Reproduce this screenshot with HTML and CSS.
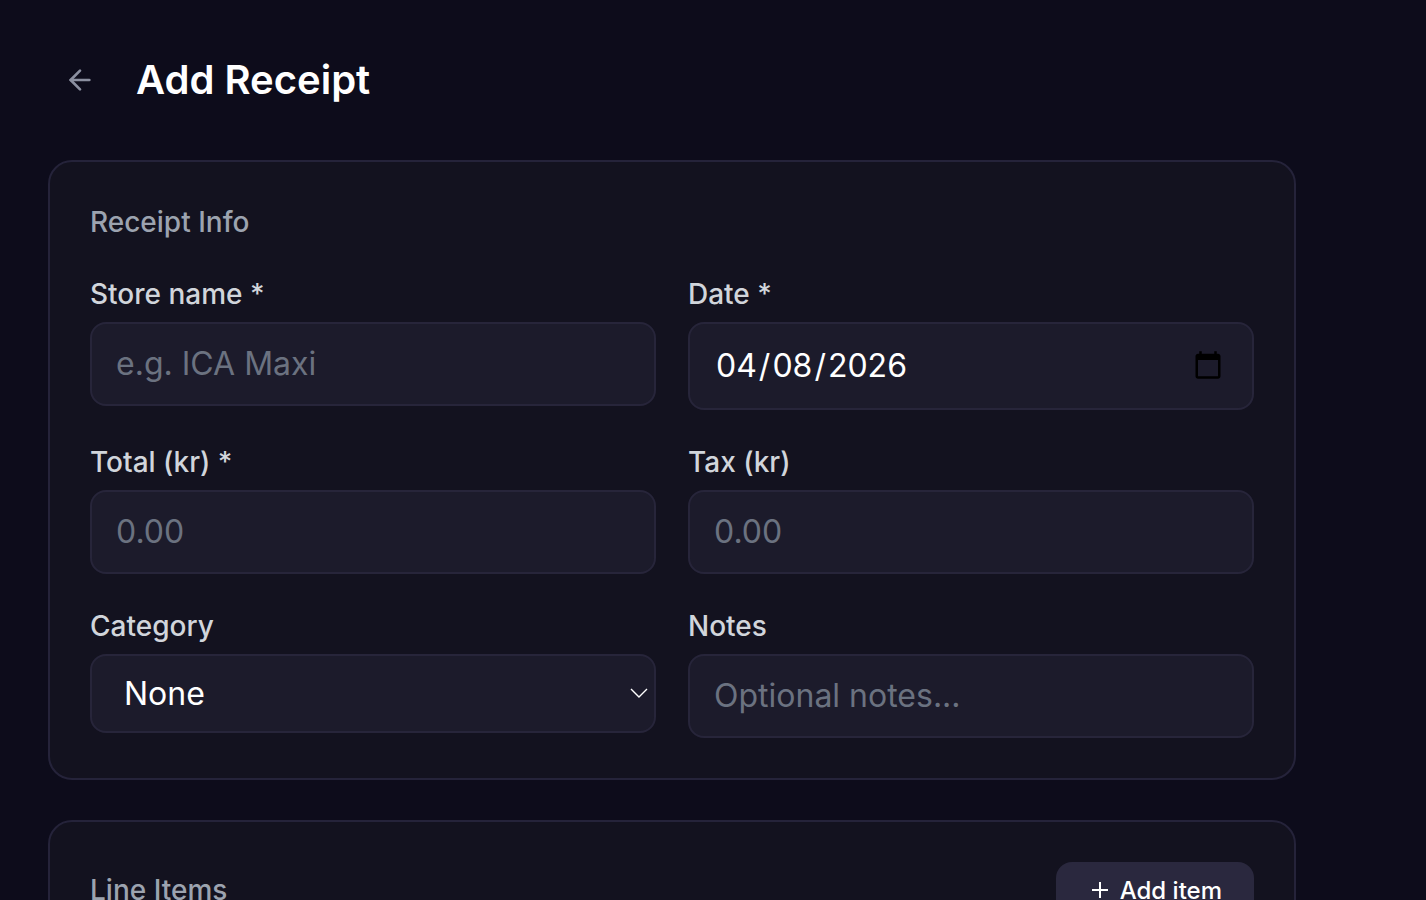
FILE: index.html
```html
<!DOCTYPE html>
<html lang="en">
<head>
    <meta charset="UTF-8">
    <meta name="viewport" content="width=device-width, initial-scale=1.0">
    <title>Add Receipt</title>
    <link rel="stylesheet" href="styles.css">
</head>
<body>
    <main class="page">
        <header class="page-header">
            <button type="button" class="back-btn" aria-label="Back">
                <svg width="32" height="32" viewBox="0 0 24 24" fill="none" stroke="currentColor" stroke-width="2" stroke-linecap="round" stroke-linejoin="round"><path d="M19 12H5"/><path d="M12 19l-7-7 7-7"/></svg>
            </button>
            <h1>Add Receipt</h1>
        </header>

        <form>
            <section class="card">
                <h2 class="card-title">Receipt Info</h2>
                <div class="form-grid">
                    <div class="form-group">
                        <label for="store">Store name *</label>
                        <input type="text" id="store" placeholder="e.g. ICA Maxi">
                    </div>
                    <div class="form-group">
                        <label for="date">Date *</label>
                        <input type="date" id="date" value="2026-04-08">
                    </div>
                    <div class="form-group">
                        <label for="total">Total (kr) *</label>
                        <input type="text" id="total" placeholder="0.00">
                    </div>
                    <div class="form-group">
                        <label for="tax">Tax (kr)</label>
                        <input type="text" id="tax" placeholder="0.00">
                    </div>
                    <div class="form-group">
                        <label for="category">Category</label>
                        <div class="select-wrap">
                            <select id="category">
                                <option>None</option>
                            </select>
                            <svg class="select-arrow" width="18" height="10" viewBox="0 0 18 10" fill="none" stroke="currentColor" stroke-width="1.4"><path d="M1 1l8 8 8-8"/></svg>
                        </div>
                    </div>
                    <div class="form-group">
                        <label for="notes">Notes</label>
                        <input type="text" id="notes" placeholder="Optional notes...">
                    </div>
                </div>
            </section>

            <section class="card">
                <div class="card-head">
                    <h2 class="card-title">Line Items</h2>
                    <button type="button" class="add-btn">
                        <svg width="24" height="24" viewBox="0 0 24 24" fill="none" stroke="currentColor" stroke-width="2"><path d="M12 4v16"/><path d="M4 12h16"/></svg>
                        Add item
                    </button>
                </div>
            </section>
        </form>
    </main>
</body>
</html>
```

FILE: styles.css
```css
:root {
    --bg: #0d0c1b;
    --card: #13121f;
    --field: #1c1b2b;
    --border: #25233a;
    --field-border: #27253a;
    --raised: #2a283e;
}

* {
    margin: 0;
    padding: 0;
    box-sizing: border-box;
    font-family: 'Inter', sans-serif;
}

html, body {
    background: var(--bg);
    color: white;
}

.page {
    padding: 48px 130px 48px 48px;
}

.page-header {
    display: flex;
    align-items: center;
    gap: 24px;
    height: 64px;
    margin-bottom: 48px;
}

.back-btn {
    display: flex;
    align-items: center;
    justify-content: center;
    width: 64px;
    height: 64px;
    background: none;
    border: none;
    color: #8b8fa0;
}

.page-header h1 {
    font-size: 40px;
    font-weight: 600;
    line-height: 64px;
}

.card {
    background: var(--card);
    border: 2px solid var(--border);
    border-radius: 24px;
    padding: 40px;
    margin-bottom: 40px;
}

.card-title {
    font-size: 28px;
    font-weight: 500;
    line-height: 40px;
    color: #9ca3af;
    margin-bottom: 32px;
}

.card-head {
    display: flex;
    justify-content: space-between;
    align-items: center;
}

.card-head .card-title {
    margin-bottom: 0;
}

.form-grid {
    display: grid;
    grid-template-columns: 1fr 1fr;
    gap: 32px;
    align-items: start;
}

.form-group label {
    display: block;
    font-size: 28px;
    font-weight: 500;
    line-height: 40px;
    color: #d1d5db;
    margin-bottom: 8px;
}

.form-group input,
.form-group select {
    display: block;
    width: 100%;
    padding: 20px 24px;
    background: var(--field);
    border: 2px solid var(--field-border);
    border-radius: 16px;
    color: white;
    font-size: 32px;
    line-height: 40px;
}

.form-group input::placeholder {
    color: #6b7280;
}

.form-group input[type="date"] {
    height: 88px;
    padding-right: 26px;
}

input::-webkit-datetime-edit-month-field,
input::-webkit-datetime-edit-day-field,
input::-webkit-datetime-edit-year-field {
    padding: 2px;
}

.select-wrap {
    position: relative;
}

.form-group select {
    height: 79px;
    padding: 0 32px;
    appearance: none;
}

.select-arrow {
    position: absolute;
    right: 8px;
    top: 34px;
    color: white;
    pointer-events: none;
}

.add-btn {
    display: flex;
    align-items: center;
    gap: 8px;
    height: 56px;
    padding: 0 32px;
    background: var(--raised);
    border: none;
    border-radius: 16px;
    color: white;
    font-size: 24px;
    font-weight: 500;
}
```
